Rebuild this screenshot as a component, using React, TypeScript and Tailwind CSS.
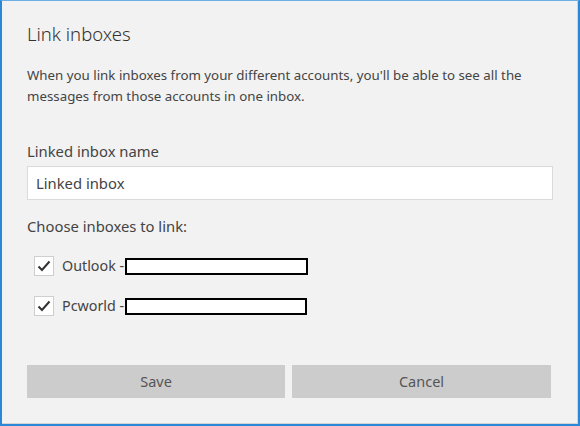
import React from "react";

const font = { fontFamily: '"Noto Sans", "Open Sans", sans-serif' };

const Check = () => (
  <div className="w-5 h-5 border border-[#cfcfcf] bg-white flex items-center justify-center shrink-0">
    <svg width="14" height="14" viewBox="0 0 14 14" fill="none">
      <path d="M1.5 7.5 L5 11 L12.5 2.5" stroke="#333" strokeWidth="2" />
    </svg>
  </div>
);

const Account = ({ name, boxW }: { name: string; boxW: string }) => (
  <div className="flex items-center h-5">
    <Check />
    <span className="ml-2 text-[14.3px] text-[#444]">{name} -</span>
    <div className={`${boxW} h-[17px] border-2 border-black bg-white ml-[1px]`} />
  </div>
);

export default function App() {
  return (
    <div
      className="w-[580px] h-[426px] bg-[#f2f2f2] border-l-2 border-t border-r-2 border-b-2 border-t-[#6aaee6] border-l-[#2b88d8] border-r-[#2b88d8] border-b-[#2b88d8] flex flex-col"
      style={font}
    >
      <div className="flex-1 flex flex-col pl-[25px] pr-[25px] border-r border-b border-[#d4d4d4]">
        <h1 className="mt-[19px] text-[18.5px] leading-[28px] font-light text-[#333]">Link inboxes</h1>
        <p className="mt-[17px] text-[13.3px] leading-[21px] text-[#444]">
          When you link inboxes from your different accounts, you'll be able to see all the
          messages from those accounts in one inbox.
        </p>
        <div className="mt-[33px] text-[14.8px] leading-[22px] text-[#444]">Linked inbox name</div>
        <div className="mt-[4px] h-[34px] w-[526px] bg-white border border-[#dadada] flex items-center pl-[8px] text-[14.8px] text-[#444]">
          Linked inbox
        </div>
        <div className="mt-[15px] text-[14.8px] leading-[22px] text-[#444]">Choose inboxes to link:</div>
        <div className="mt-[19px] pl-[7px] flex flex-col gap-[20px]">
          <Account name="Outlook" boxW="w-[183px]" />
          <Account name="Pcworld" boxW="w-[182px]" />
        </div>
        <div className="mt-[49px] flex gap-[7px]">
          <button className="w-[258px] h-[33px] bg-[#cccccc] text-[14.5px] text-[#555]">Save</button>
          <button className="w-[259px] h-[33px] bg-[#cccccc] text-[14.5px] text-[#555]">Cancel</button>
        </div>
      </div>
    </div>
  );
}
